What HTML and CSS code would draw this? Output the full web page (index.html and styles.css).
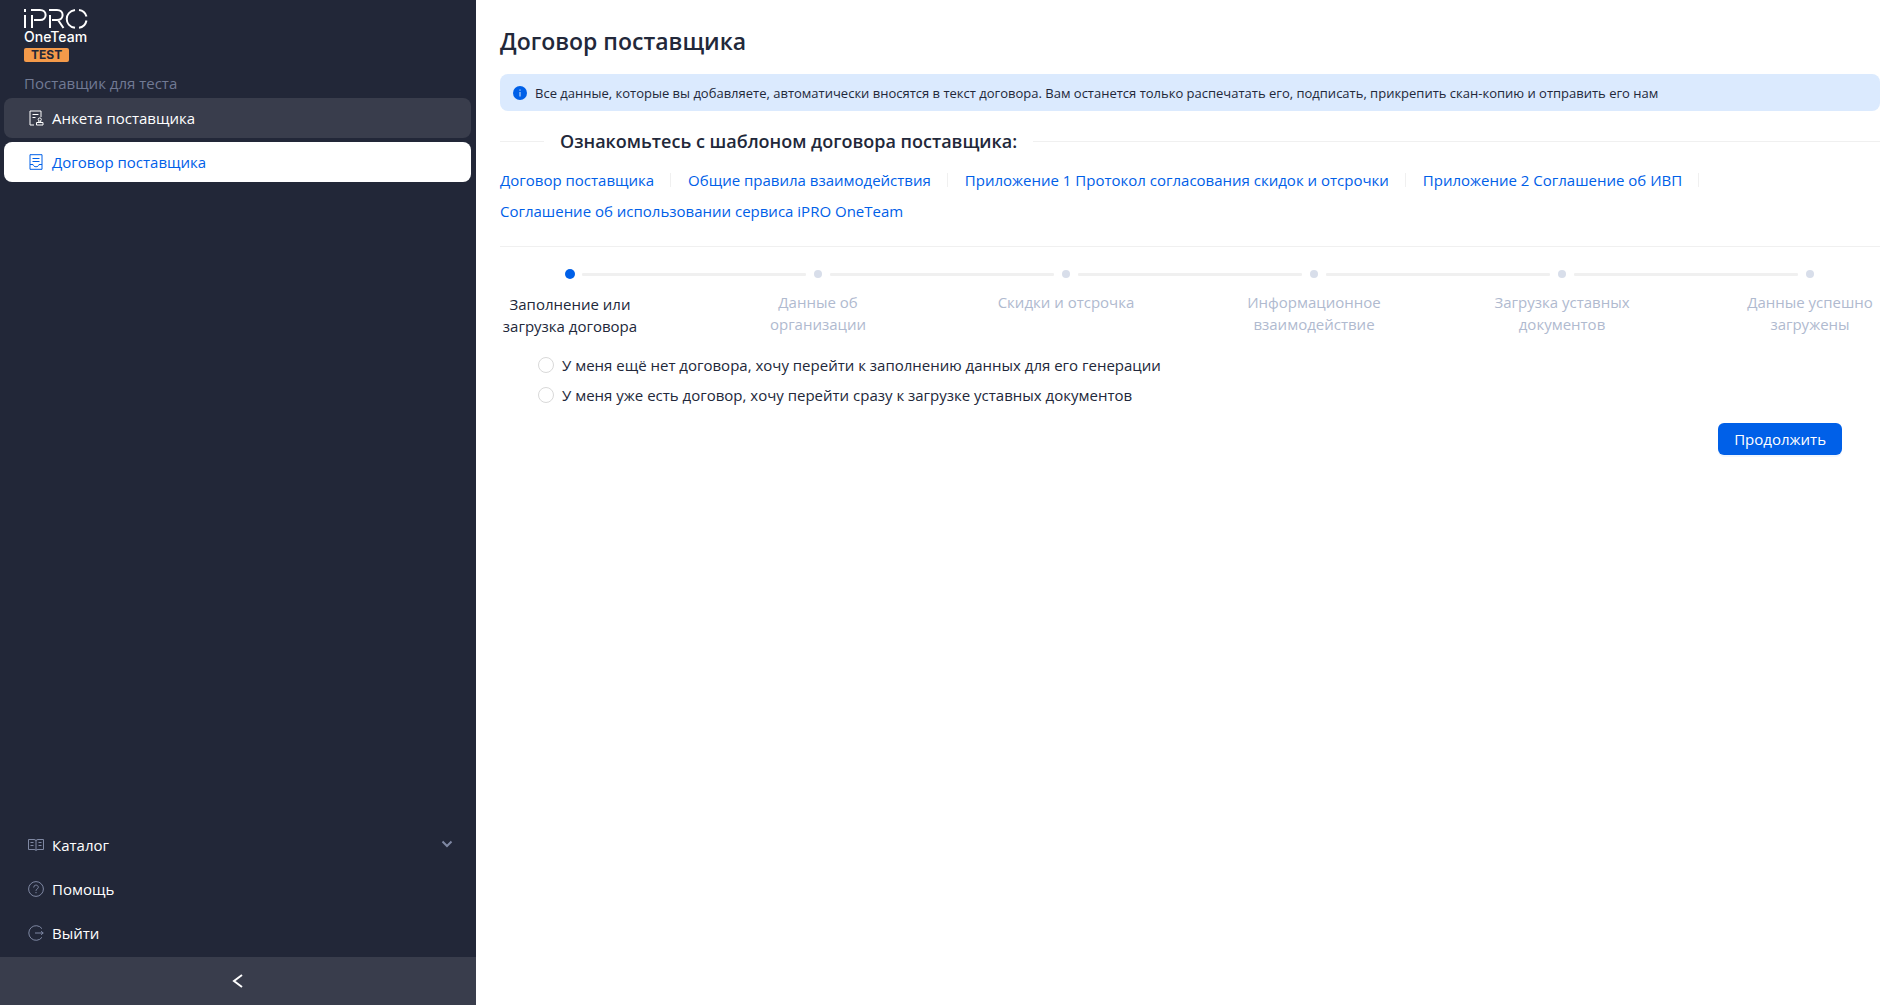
FILE: index.html
```html
<!DOCTYPE html>
<html lang="ru">
<head>
<meta charset="utf-8">
<meta name="viewport" content="width=device-width, initial-scale=1">
<title>Договор поставщика</title>
<link rel="stylesheet" href="styles.css">
</head>
<body>
<div class="layout">
  <aside class="sidebar">
    <div class="brand">
      <svg class="brand-mark" viewBox="0 0 64 21" aria-hidden="true">
        <path d="M1 7V20M1 1V4M8 20V7M7 2H16C23.500 2 23.500 12 16 12H10M26 20V7M25 2H33C40.500 2 40.500 12 33 12H28M34 12L39.500 20M51 2C40 4 40 18 51 19.800M55 2C59 2.500 61.500 5 62.500 8.500M62.500 12.500C61.500 17 59 19.300 55 19.800"/>
      </svg>
      <span class="brand-name">OneTeam</span>
      <span class="brand-badge">TEST</span>
    </div>
    <p class="account">Поставщик для теста</p>
    <nav class="menu">
      <a class="menu-item menu-item--hover" href="#profile">
        <svg class="icon" viewBox="0 0 16 16" aria-hidden="true"><path d="M6 15H2V1H13V7M4.500 4.500H10.500M4.500 7.500H7.500M8.500 15H15V12.500H8.500ZM10.800 12.300V11M12.700 12.300V11"/><circle cx="11.750" cy="9.500" r="1.600"/></svg>
        Анкета поставщика
      </a>
      <a class="menu-item menu-item--active" href="#contract">
        <svg class="icon" viewBox="0 0 16 16" aria-hidden="true"><path d="M2 .7H14V15.300H2ZM4.500 4.500H11.500M4.500 7.500H11.500M2 10.500H5C5.500 13.500 10.500 13.500 11 10.500H14"/></svg>
        Договор поставщика
      </a>
    </nav>
    <nav class="menu menu--bottom">
      <a class="menu-item" href="#catalog">
        <svg class="icon icon--muted" viewBox="0 0 16 16" aria-hidden="true"><path d="M.5 2.500H6Q8 2.500 8 4Q8 2.500 10 2.500H15.500V12.500H10Q8 12.500 8 13.500Q8 12.500 6 12.500H.5ZM8 4V13.500M2.500 5.500H5.500M2.500 8.500H5.500M10.500 5.500H13.500M10.500 8.500H13.500"/></svg>
        Каталог
        <svg class="chevron" viewBox="0 0 12 12" aria-hidden="true"><path d="M1.500 2.500L6 7L10.500 2.500"/></svg>
      </a>
      <a class="menu-item" href="#help">
        <svg class="icon icon--muted" viewBox="0 0 16 16" aria-hidden="true"><circle cx="8" cy="8" r="7.400"/><path d="M5.700 6.500C5.700 3.400 10.300 3.400 10.300 6.300C10.300 8 8 7.800 8 9.800M8 11V12.200"/></svg>
        Помощь
      </a>
      <a class="menu-item" href="#logout">
        <svg class="icon icon--muted" viewBox="0 0 16 16" aria-hidden="true"><path d="M14 3.700A7.300 7.300 0 1 0 14 12.300M7 8H15M13 6.300L15.300 8L13 9.700"/></svg>
        Выйти
      </a>
    </nav>
    <button class="collapse" type="button" aria-label="Свернуть меню">
      <svg class="collapse-icon" viewBox="0 0 16 16" aria-hidden="true"><path d="M12 2L4 8L12 14"/></svg>
    </button>
  </aside>

  <main class="content">
    <h1 class="title">Договор поставщика</h1>
    <div class="notice" role="note">
      <svg class="notice-icon" viewBox="0 0 14 14" aria-hidden="true"><circle cx="7" cy="7" r="7"/><path d="M7 6V10.500M7 3.500V4.700"/></svg>
      <span>Все данные, которые вы добавляете, автоматически вносятся в текст договора. Вам останется только распечатать его, подписать, прикрепить скан-копию и отправить его нам</span>
    </div>
    <h2 class="section-title">Ознакомьтесь с шаблоном договора поставщика:</h2>
    <ul class="links">
      <li class="links-item"><a class="link" href="#doc-contract">Договор поставщика</a></li>
      <li class="links-item"><a class="link" href="#doc-rules">Общие правила взаимодействия</a></li>
      <li class="links-item"><a class="link" href="#doc-app1">Приложение 1 Протокол согласования скидок и отсрочки</a></li>
      <li class="links-item"><a class="link" href="#doc-app2">Приложение 2 Соглашение об ИВП</a></li>
      <li class="links-item"><a class="link" href="#doc-service">Соглашение об использовании сервиса iPRO OneTeam</a></li>
    </ul>
    <ol class="steps">
      <li class="step step--active" aria-current="step"><span class="step-label">Заполнение или загрузка договора</span></li>
      <li class="step"><span class="step-label">Данные об организации</span></li>
      <li class="step"><span class="step-label">Скидки и отсрочка</span></li>
      <li class="step"><span class="step-label">Информационное взаимодействие</span></li>
      <li class="step"><span class="step-label">Загрузка уставных документов</span></li>
      <li class="step"><span class="step-label">Данные успешно загружены</span></li>
    </ol>
    <form class="form">
      <label class="choice"><input class="radio" type="radio" name="mode" value="new">У меня ещё нет договора, хочу перейти к заполнению данных для его генерации</label>
      <label class="choice"><input class="radio" type="radio" name="mode" value="existing">У меня уже есть договор, хочу перейти сразу к загрузке уставных документов</label>
      <button class="submit" type="button">Продолжить</button>
    </form>
  </main>
</div>
</body>
</html>
```
FILE: styles.css
```css
*, *::before, *::after {
  box-sizing: border-box;
}

body {
  margin: 0;
  background: #fff;
  color: #22283a;
  font-family: "Segoe UI", "Open Sans", "Noto Sans", sans-serif;
  font-size: 15px;
  line-height: 22px;
}

a {
  text-decoration: none;
}

.layout {
  display: flex;
  min-height: 100vh;
}

/* Sidebar */
.sidebar {
  display: flex;
  flex-direction: column;
  flex: 0 0 25%;
  background: #222738;
  color: #fff;
}

.brand {
  display: flex;
  flex-direction: column;
  align-items: flex-start;
  padding: 8px 24px 0;
  font-family: Inter, "Liberation Sans", sans-serif;
}

.brand-mark {
  width: 64px;
  height: 21px;
  fill: none;
  stroke: #fff;
  stroke-width: 2;
}

.brand-name {
  font-size: 14px;
  font-weight: 500;
  line-height: 16px;
}

.brand-badge {
  margin-top: 3px;
  padding: 0 7px;
  border-radius: 2px;
  background: #f49a4a;
  color: #222738;
  font-size: 12px;
  font-weight: 700;
  line-height: 14px;
}

.account {
  margin: 10px 24px 4px;
  color: #717a94;
}

.menu {
  display: flex;
  flex-direction: column;
  gap: 4px;
  padding: 0 5px 0 4px;
}

.menu--bottom {
  margin-top: auto;
  padding-bottom: 4px;
}

.menu-item {
  display: flex;
  align-items: center;
  gap: 8px;
  height: 40px;
  padding: 0 18px 0 24px;
  border-radius: 8px;
  color: #fff;
}

.menu-item--hover {
  background: #393d4c;
}

.menu-item--active {
  background: #fff;
  color: #0060e8;
}

.icon {
  width: 16px;
  height: 16px;
  fill: none;
  stroke: currentColor;
  stroke-width: 1;
}

.icon--muted {
  color: #7f88a3;
}

.chevron {
  width: 12px;
  height: 12px;
  margin-left: auto;
  fill: none;
  stroke: #7f88a3;
  stroke-width: 2;
}

.collapse {
  display: flex;
  align-items: center;
  justify-content: center;
  height: 48px;
  padding: 0;
  border: 0;
  background: #393d4c;
  cursor: pointer;
}

.collapse-icon {
  width: 16px;
  height: 16px;
  fill: none;
  stroke: #fff;
  stroke-width: 2;
}

/* Content */
.content {
  flex: 1;
  min-width: 0;
  padding: 24px;
}

.title {
  margin: 0 0 16px;
  font-size: 23px;
  font-weight: 600;
  line-height: 34px;
}

.notice {
  display: flex;
  align-items: center;
  gap: 8px;
  padding: 8px 13px 7px;
  border-radius: 8px;
  background: #dbeafe;
  font-size: 13px;
}

.notice-icon {
  flex: none;
  width: 14px;
  height: 14px;
  fill: #0060e8;
  stroke: #dbeafe;
}

.notice-icon circle {
  stroke: none;
}

.section-title {
  display: flex;
  align-items: center;
  gap: 16px;
  margin: 16px 0 14px;
  font-size: 18px;
  font-weight: 600;
  line-height: 28px;
}

.section-title::before,
.section-title::after {
  content: "";
  height: 1px;
  background: #f0f0f0;
}

.section-title::before {
  width: 44px;
}

.section-title::after {
  flex: 1;
}

.links {
  display: flex;
  flex-wrap: wrap;
  row-gap: 9px;
  margin: 0;
  padding: 0 0 24px;
  border-bottom: 1px solid #f0f0f0;
  list-style: none;
}

.links-item {
  display: flex;
  align-items: center;
}

.links-item:not(:last-child)::after {
  content: "";
  width: 1px;
  height: 14px;
  margin: 0 17px 0 16px;
  background: #f0f0f0;
}

.link {
  color: #0060e8;
}

/* Progress */
.steps {
  display: flex;
  margin: 22px 0 0;
  padding: 0;
  list-style: none;
}

.step {
  position: relative;
  flex: 1;
  color: #b0bacf;
}

.step:last-child {
  flex: none;
}

.step::before {
  content: "";
  display: block;
  width: 8px;
  height: 8px;
  margin: 1px 66px 13px;
  border-radius: 50%;
  background: #d8deea;
}

.step:not(:last-child)::after {
  content: "";
  position: absolute;
  top: 4px;
  left: 82px;
  right: -58px;
  height: 3px;
  border-radius: 1px;
  background: #f0f0f0;
}

.step--active {
  color: #22283a;
}

.step--active::before {
  width: 10px;
  height: 10px;
  margin: 0 65px 14px;
  background: #0060e8;
}

.step-label {
  display: block;
  width: 140px;
  text-align: center;
}

/* Form */
.form {
  display: flex;
  flex-direction: column;
  align-items: flex-start;
  gap: 8px;
  padding: 17px 38px;
}

.choice {
  display: flex;
  align-items: center;
  gap: 8px;
}

.radio {
  appearance: none;
  width: 16px;
  height: 16px;
  margin: 0;
  border: 1px solid #d9d9d9;
  border-radius: 50%;
  background: #fff;
}

.radio:checked {
  border: 5px solid #0060e8;
}

.submit {
  align-self: flex-end;
  height: 32px;
  margin-top: 9px;
  padding: 0 16px;
  border: 0;
  border-radius: 6px;
  background: #0060e8;
  box-shadow: 0 2px 0 #f0f6fe;
  color: #fff;
  font: inherit;
  cursor: pointer;
}
```
